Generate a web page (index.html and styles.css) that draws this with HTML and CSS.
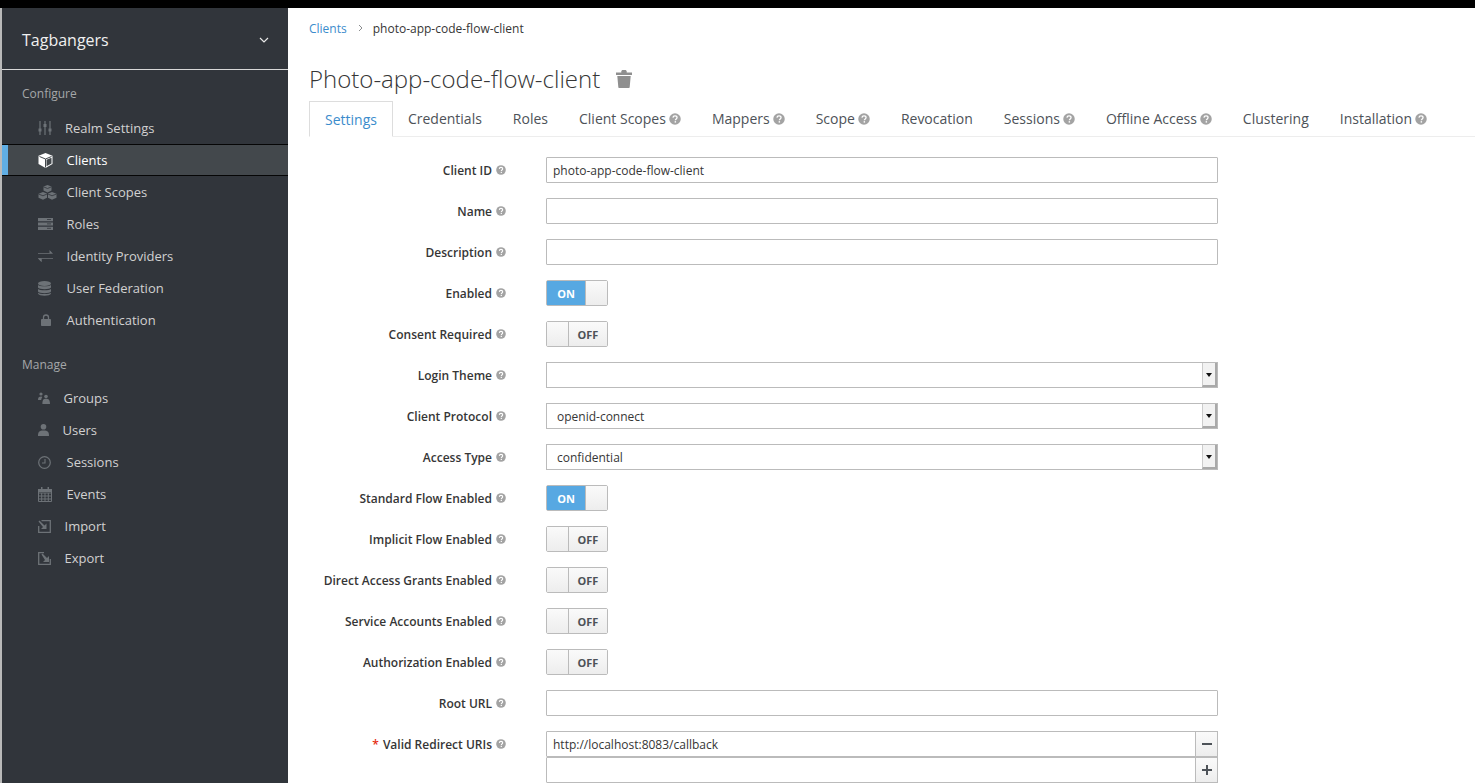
FILE: index.html
```html
<!DOCTYPE html>
<html lang="en">
  <head>
    <meta charset="UTF-8" />
    <title>Tagbangers - Client settings</title>
    <link rel="stylesheet" href="styles.css">
  </head>
  <body>
    <svg class="sprites" width="0" height="0">
      <symbol id="help" viewBox="0 0 10 10">
        <circle cx="5" cy="5" r="4.8" fill="#a3a3a3" />
        <path d="M3.3 3.9C3.4 2.9 4.1 2.4 5 2.4c1 0 1.7.6 1.7 1.4 0 1.2-1.4 1.1-1.4 2.3" fill="none" stroke="#fff" stroke-width="1.1" />
        <rect x="4.7" y="6.8" width="1.2" height="1.2" fill="#fff" />
      </symbol>
    </svg>

    <div class="topbar"></div>

    <div class="layout">
      <aside class="sidebar">
        <div class="realm">
          <span>Tagbangers</span>
          <svg class="realm-caret" width="10" height="6" viewBox="0 0 10 6"><path d="M1 1l4 4 4-4" fill="none" stroke="#e8e8e8" stroke-width="1.2" /></svg>
        </div>

        <h4 class="nav-title">Configure</h4>
        <ul class="nav">
          <li class="nav-item off-27">
            <span class="nav-icon"><svg width="14" height="14" viewBox="0 0 14 14"><path d="M2 0v14M7 0v14M12 0v14" stroke="#6d7277" stroke-width="1.2" /><path d="M.5 7.5h3v3h-3zM5.5 3h3v3h-3zM10.5 7.5h3v3h-3z" fill="#6d7277" /></svg></span>
            <a>Realm Settings</a>
          </li>
          <li class="nav-item active">
            <span class="nav-icon"><svg width="15" height="15" viewBox="0 0 15 15"><path d="M7.5 0L14.5 2.8V11L7.5 15 .5 11V2.8z" fill="#fff" /><path d="M1.5 3.5L7.5 6l6-2.500M7.500 6v8.500" fill="none" stroke="#43484c" stroke-width="1" /><path d="M8.500 6.800l5-2v5.700l-5 2.800z" fill="#43484c" /></svg></span>
            <a>Clients</a>
          </li>
          <li class="nav-item">
            <span class="nav-icon"><svg width="19" height="15" viewBox="0 0 19 15"><path d="M9.500 0l4 1.600v4l-4 2-4-2v-4zM5 7l4 1.600v4.200l-4 2-4.500-2V8.800zM14 7l4.500 1.800v4l-4.500 2-4-2V8.600z" fill="#6d7277" /><path d="M5.500 1.800l4 1.700 4-1.700M.5 9l4.500 1.800L9 9M10 9l4 1.800L18.500 9" fill="none" stroke="#31353b" stroke-width=".8" /></svg></span>
            <a>Client Scopes</a>
          </li>
          <li class="nav-item">
            <span class="nav-icon"><svg width="15" height="12" viewBox="0 0 15 12"><path d="M0 0h15v3.200H0zM0 4.400h15v3.200H0zM0 8.800h15V12H0z" fill="#6d7277" /><path d="M9 1.500h4M9 5.900h4M9 10.300h4" stroke="#31353b" stroke-width=".8" /></svg></span>
            <a>Roles</a>
          </li>
          <li class="nav-item">
            <span class="nav-icon"><svg width="15" height="12" viewBox="0 0 15 12"><path d="M0 3h11.500V0L15 3.800H0zM15 8.200H3.500V12L0 8.200z" fill="#6d7277" /><path d="M0 8.200h15v.8H3.500v3L0 8.500z" fill="#6d7277" /></svg></span>
            <a>Identity Providers</a>
          </li>
          <li class="nav-item">
            <span class="nav-icon"><svg width="13" height="15" viewBox="0 0 13 15"><ellipse cx="6.500" cy="2.500" rx="6.500" ry="2.500" fill="#6d7277" /><path d="M0 4c1 1.700 12 1.700 13 0v2.500c-1 2.200-12 2.200-13 0zM0 8c1 1.700 12 1.700 13 0v2.500c-1 2.200-12 2.200-13 0zM0 11.800c1 1.700 12 1.700 13 0v.7C12 15.500 1 15.500 0 12.500z" fill="#6d7277" /></svg></span>
            <a>User Federation</a>
          </li>
          <li class="nav-item">
            <span class="nav-icon"><svg class="shift-lock" width="10" height="12" viewBox="0 0 10 12"><path d="M2.500 5V3.500a2.500 2.500 0 0 1 5 0V5" fill="none" stroke="#6d7277" stroke-width="1.300" /><rect y="5" width="10" height="7" rx=".8" fill="#6d7277" /></svg></span>
            <a>Authentication</a>
          </li>
        </ul>

        <h4 class="nav-title manage">Manage</h4>
        <ul class="nav">
          <li class="nav-item off-25">
            <span class="nav-icon"><svg width="12" height="12" viewBox="0 0 12 12"><circle cx="3" cy="2" r="1.600" fill="#6d7277" /><circle cx="8" cy="4.500" r="1.800" fill="#6d7277" /><path d="M0 8c0-3 1-3.500 3-3.500.8 0 1 .2 1.300.5C3.600 6 3.300 6.800 3.200 8zM4.400 12c0-4 1-5.200 3.600-5.200S12 8 12 12z" fill="#6d7277" /></svg></span>
            <a>Groups</a>
          </li>
          <li class="nav-item off-24">
            <span class="nav-icon"><svg width="11" height="12" viewBox="0 0 11 12"><circle cx="5.500" cy="2.800" r="2.800" fill="#6d7277" /><path d="M0 12c0-4 1-5.500 5.500-5.500S11 8 11 12z" fill="#6d7277" /></svg></span>
            <a>Users</a>
          </li>
          <li class="nav-item">
            <span class="nav-icon"><svg width="13" height="13" viewBox="0 0 13 13"><circle cx="6.500" cy="6.500" r="5.800" fill="none" stroke="#6d7277" stroke-width="1.200" /><path d="M7 3v4H4" fill="none" stroke="#6d7277" stroke-width="1.100" /></svg></span>
            <a>Sessions</a>
          </li>
          <li class="nav-item">
            <span class="nav-icon"><svg width="14" height="15" viewBox="0 0 14 15"><path d="M.5 2.500h13v12H.5zM.5 6h13M.5 9h13M.5 12h13M3.700 6v8.500M7 6v8.500M10.300 6v8.500" fill="none" stroke="#6d7277" stroke-width="1" /><path d="M3 0h1.500v4H3zM9.500 0H11v4H9.500zM0 2h14v3H0z" fill="#6d7277" /></svg></span>
            <a>Events</a>
          </li>
          <li class="nav-item off-26">
            <span class="nav-icon"><svg width="13" height="13" viewBox="0 0 13 13"><path d="M3.500.7h8.800v11.600H.7V6" fill="none" stroke="#6d7277" stroke-width="1.300" /><path d="M.5 1.500l1-1 5 5L8.500 3.500V9H3l2-2z" fill="#6d7277" /></svg></span>
            <a>Import</a>
          </li>
          <li class="nav-item off-26">
            <span class="nav-icon"><svg width="13" height="13" viewBox="0 0 13 13"><path d="M12.300 7v5.300H.7V.7H6" fill="none" stroke="#6d7277" stroke-width="1.300" /><path d="M3.500 2.500l1-1 4.500 4.500 2-2v6H5l2-2z" fill="#6d7277" /></svg></span>
            <a>Export</a>
          </li>
        </ul>
      </aside>

      <main class="content">
        <ol class="breadcrumb">
          <li><a>Clients</a></li>
          <li class="crumb-sep"><svg width="5" height="8" viewBox="0 0 5 8"><path d="M1 1l3 3-3 3" fill="none" stroke="#8b8d8f" stroke-width="1" /></svg></li>
          <li>photo-app-code-flow-client</li>
        </ol>

        <h1 class="page-title">
          Photo-app-code-flow-client
          <svg width="16" height="18" viewBox="0 0 16 18"><path d="M0 2.500h5.300V1L6.300 0h3.400l1 1v1.500H16V5H0z" fill="#8f8f8f" /><path d="M1.300 6h13.400l-1 11c0 .6-.5 1-1 1H3.300c-.5 0-1-.4-1-1z" fill="#8f8f8f" /></svg>
        </h1>

        <ul class="tabs">
          <li class="tab active">Settings</li>
          <li class="tab">Credentials</li>
          <li class="tab">Roles</li>
          <li class="tab">Client Scopes <svg class="help-lg"><use href="#help" /></svg></li>
          <li class="tab">Mappers <svg class="help-lg"><use href="#help" /></svg></li>
          <li class="tab">Scope <svg class="help-lg"><use href="#help" /></svg></li>
          <li class="tab">Revocation</li>
          <li class="tab">Sessions <svg class="help-lg"><use href="#help" /></svg></li>
          <li class="tab">Offline Access <svg class="help-lg"><use href="#help" /></svg></li>
          <li class="tab">Clustering</li>
          <li class="tab">Installation <svg class="help-lg"><use href="#help" /></svg></li>
        </ul>

        <form class="client-form">
          <label class="field-label">Client ID <svg class="help"><use href="#help" /></svg></label>
          <input class="field-input" value="photo-app-code-flow-client" />

          <label class="field-label">Name <svg class="help"><use href="#help" /></svg></label>
          <input class="field-input" />

          <label class="field-label">Description <svg class="help"><use href="#help" /></svg></label>
          <input class="field-input" />

          <label class="field-label">Enabled <svg class="help"><use href="#help" /></svg></label>
          <div class="toggle on"><span class="toggle-text">ON</span><span class="toggle-knob"></span></div>

          <label class="field-label">Consent Required <svg class="help"><use href="#help" /></svg></label>
          <div class="toggle"><span class="toggle-knob"></span><span class="toggle-text">OFF</span></div>

          <label class="field-label">Login Theme <svg class="help"><use href="#help" /></svg></label>
          <div class="select"><span class="select-value"></span><span class="select-arrow"></span></div>

          <label class="field-label">Client Protocol <svg class="help"><use href="#help" /></svg></label>
          <div class="select"><span class="select-value">openid-connect</span><span class="select-arrow"></span></div>

          <label class="field-label">Access Type <svg class="help"><use href="#help" /></svg></label>
          <div class="select"><span class="select-value">confidential</span><span class="select-arrow"></span></div>

          <label class="field-label">Standard Flow Enabled <svg class="help"><use href="#help" /></svg></label>
          <div class="toggle on"><span class="toggle-text">ON</span><span class="toggle-knob"></span></div>

          <label class="field-label">Implicit Flow Enabled <svg class="help"><use href="#help" /></svg></label>
          <div class="toggle"><span class="toggle-knob"></span><span class="toggle-text">OFF</span></div>

          <label class="field-label">Direct Access Grants Enabled <svg class="help"><use href="#help" /></svg></label>
          <div class="toggle"><span class="toggle-knob"></span><span class="toggle-text">OFF</span></div>

          <label class="field-label">Service Accounts Enabled <svg class="help"><use href="#help" /></svg></label>
          <div class="toggle"><span class="toggle-knob"></span><span class="toggle-text">OFF</span></div>

          <label class="field-label">Authorization Enabled <svg class="help"><use href="#help" /></svg></label>
          <div class="toggle"><span class="toggle-knob"></span><span class="toggle-text">OFF</span></div>

          <label class="field-label">Root URL <svg class="help"><use href="#help" /></svg></label>
          <input class="field-input" />

          <label class="field-label"><span class="required">*</span> Valid Redirect URIs <svg class="help"><use href="#help" /></svg></label>
          <div class="multi">
            <div class="multi-row">
              <input class="field-input" value="http://localhost:8083/callback" />
              <button class="multi-btn" type="button"><svg width="10" height="10" viewBox="0 0 10 10"><path d="M0 4h10v2H0z" fill="#4d5258" /></svg></button>
            </div>
            <div class="multi-row">
              <input class="field-input" />
              <button class="multi-btn" type="button"><svg width="10" height="10" viewBox="0 0 10 10"><path d="M0 4h4V0h2v4h4v2H6v4H4V6H0z" fill="#4d5258" /></svg></button>
            </div>
          </div>
        </form>
      </main>
    </div>
  </body>
</html>
```

FILE: styles.css
```css
* {
  box-sizing: border-box;
}

body {
  margin: 0;
  height: 783px;
  overflow: hidden;
  background: #fff;
  color: #363636;
  font-family: "Open Sans", sans-serif;
  font-size: 13px;
}

.sprites {
  position: absolute;
}

ul,
ol {
  list-style: none;
  margin: 0;
  padding: 0;
}

.topbar {
  height: 8px;
  background: #000;
}

.layout {
  display: flex;
  height: 775px;
}

/* sidebar */
.sidebar {
  width: 286px;
  flex-shrink: 0;
  margin-left: 2px;
  background: #31353b;
  box-shadow: -2px 0 0 #b9b9b9;
  color: #d1d1d1;
}

.realm {
  display: flex;
  justify-content: space-between;
  align-items: center;
  height: 62px;
  padding: 3px 20px 0;
  border-bottom: 1px solid #d8d8d8;
  color: #f0f0f0;
  font-size: 16px;
}

.realm-caret {
  margin-right: -1px;
}

.nav-title {
  margin: 15px 0 9px 20px;
  color: #a5a7a9;
  font-size: 12px;
  font-weight: 400;
  line-height: 18px;
}

.nav-title.manage {
  margin-top: 20px;
  margin-bottom: 8px;
}

.nav-item {
  display: flex;
  align-items: center;
  height: 32px;
  padding-left: 36px;
  --label-x: 28.5px;
}

.nav-item.off-27 {
  --label-x: 27px;
}

.nav-item.off-26 {
  --label-x: 26.5px;
}

.nav-item.off-25 {
  --label-x: 25.5px;
}

.nav-item.off-24 {
  --label-x: 24.5px;
}

.nav-icon {
  display: flex;
  align-items: center;
  width: var(--label-x);
  flex-shrink: 0;
}

.nav-item.active {
  position: relative;
  background: #43484c;
  border-top: 1px solid #060606;
  border-bottom: 1px solid #060606;
  color: #fff;
  box-shadow: inset 6px 0 0 #60aee4;
}

.shift-lock {
  margin-left: 3px;
}

/* main area */
.content {
  flex: 1;
  min-width: 0;
  padding-left: 21px;
}

.breadcrumb {
  display: flex;
  align-items: center;
  height: 40px;
  font-size: 12px;
}

.breadcrumb a {
  color: #3b8ccc;
}

.crumb-sep {
  display: flex;
  margin: 0 10px 0 11px;
}

.page-title {
  display: flex;
  align-items: center;
  gap: 16px;
  margin: 0;
  height: 53px;
  padding-top: 8px;
  color: #363636;
  font-size: 24px;
  font-weight: 300;
}

.tabs {
  display: flex;
  height: 36px;
  border-bottom: 1px solid #ededed;
}

.tab {
  display: flex;
  align-items: center;
  gap: 3px;
  margin: 0 1px 0 0;
  padding: 0 15px;
  color: #4d5258;
  font-size: 14px;
  white-space: nowrap;
}

.tab.active {
  height: 36px;
  margin-right: 0;
  background: #fff;
  border: 1px solid #ddd;
  border-bottom-color: #fff;
  color: #3b8ccc;
}

.help-lg {
  width: 12px;
  height: 12px;
}

.help {
  width: 10px;
  height: 10px;
  margin-left: 1px;
}

/* form */
.client-form {
  display: grid;
  grid-template-columns: 197px 672px;
  column-gap: 40px;
  row-gap: 15px;
  margin-top: 20px;
}

.field-label {
  display: flex;
  justify-content: flex-end;
  align-items: center;
  gap: 3px;
  height: 26px;
  color: #363636;
  font-weight: 600;
  white-space: nowrap;
  font-size: 12px;
}

.required {
  color: #e52b10;
  margin-right: 1px;
}

.field-input {
  width: 100%;
  height: 26px;
  padding: 0 6px;
  border: 1px solid #bbb;
  border-radius: 1px;
  background: #fff;
  color: #363636;
  font: 12px "Open Sans", sans-serif;
  outline: 0;
}

.toggle {
  display: flex;
  width: 62px;
  height: 26px;
  border: 1px solid #bbb;
  border-radius: 2px;
  font-size: 11px;
  font-weight: 700;
}

.toggle-text {
  display: flex;
  justify-content: center;
  align-items: center;
  width: 38px;
  background: linear-gradient(#fafafa, #ededed);
  color: #4d5258;
}

.toggle-knob {
  flex: 1;
  background: linear-gradient(#fafafa, #ededed);
  border-right: 1px solid #bbb;
}

.toggle.on .toggle-text {
  background: #57a8e2;
  color: #fff;
}

.toggle.on .toggle-knob {
  border-right: 0;
  border-left: 1px solid #bbb;
}

.select {
  display: flex;
  height: 26px;
  border: 1px solid #bbb;
  background: #fff;
  font-size: 12px;
}

.select-value {
  flex: 1;
  display: flex;
  align-items: center;
  padding-left: 10px;
}

.select-arrow {
  position: relative;
  width: 15px;
  background: #f2f2f2;
  border-left: 1px solid #ccc;
  border-right: 2px solid #a9a9a9;
  border-bottom: 2px solid #a9a9a9;
}

.select-arrow::after {
  content: "";
  position: absolute;
  top: 10px;
  left: 3px;
  border: 3.5px solid transparent;
  border-top: 4px solid #111;
  border-bottom: 0;
}

.multi-row {
  display: flex;
  height: 26px;
}

.multi-btn {
  display: flex;
  justify-content: center;
  align-items: center;
  width: 23px;
  flex-shrink: 0;
  margin-left: -1px;
  padding: 0;
  background: linear-gradient(#fafafa, #ededed);
  border: 1px solid #bbb;
}
```
